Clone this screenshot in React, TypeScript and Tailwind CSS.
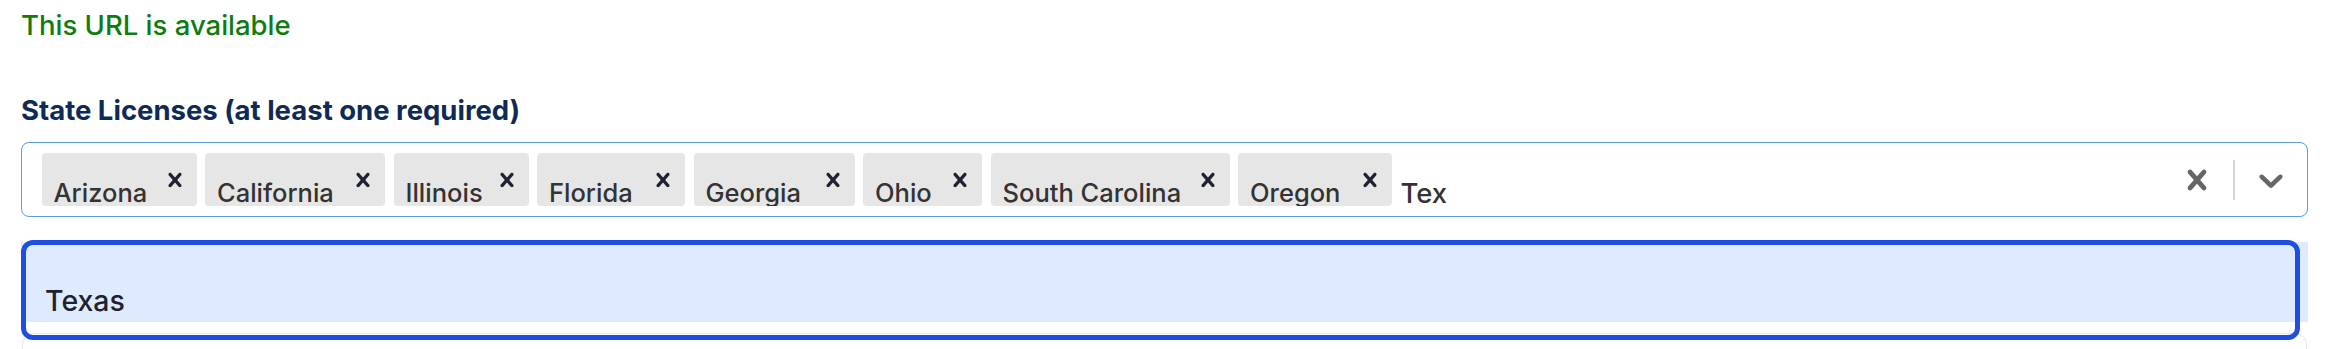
import React from "react";

// react-select style icons
function CrossIcon({ size }: { size: number }) {
  return (
    <svg viewBox="0 0 20 20" width={size} height={size} fill="currentColor" aria-hidden="true">
      <path d="M14.348 14.849c-0.469 0.469-1.229 0.469-1.697 0l-2.651-3.030-2.651 3.029c-0.469 0.469-1.229 0.469-1.697 0-0.469-0.469-0.469-1.229 0-1.697l2.758-3.15-2.759-3.152c-0.469-0.469-0.469-1.228 0-1.697s1.228-0.469 1.697 0l2.652 3.031 2.651-3.031c0.469-0.469 1.228-0.469 1.697 0s0.469 1.229 0 1.697l-2.758 3.152 2.758 3.15c0.469 0.469 0.469 1.229 0 1.698z" />
    </svg>
  );
}

function ChevronIcon({ size }: { size: number }) {
  return (
    <svg viewBox="0 0 20 20" width={size} height={size} fill="currentColor" aria-hidden="true">
      <path d="M4.516 7.548c0.436-0.446 1.043-0.481 1.576 0l3.908 3.747 3.908-3.747c0.533-0.481 1.141-0.446 1.574 0 0.436 0.445 0.408 1.197 0 1.615-0.406 0.418-4.695 4.502-4.695 4.502-0.217 0.223-0.502 0.335-0.787 0.335s-0.57-0.112-0.789-0.335c0 0-4.287-4.084-4.695-4.502s-0.436-1.17 0-1.615z" />
    </svg>
  );
}

const states = [
  { name: "Arizona", w: "w-[155px]" },
  { name: "California", w: "w-[180px]" },
  { name: "Illinois", w: "w-[135px]" },
  { name: "Florida", w: "w-[148px]" },
  { name: "Georgia", w: "w-[161px]" },
  { name: "Ohio", w: "w-[119px]" },
  { name: "South Carolina", w: "w-[239px]" },
  { name: "Oregon", w: "w-[154px]" },
];

function Chip({ name, w }: { name: string; w: string }) {
  return (
    <div className={`flex h-[53px] shrink-0 overflow-hidden rounded-[4px] bg-[#e6e6e6] ${w}`}>
      <div className="min-w-0 flex-1 self-start overflow-hidden whitespace-nowrap pl-[12px] pt-[26.5px] text-[25.5px] font-medium leading-[26px] text-[#333]">
        {name}
      </div>
      <div className="flex w-[44px] shrink-0 items-center justify-center text-[#1f2233]">
        <CrossIcon size={28} />
      </div>
    </div>
  );
}

export default function App() {
  return (
    <div className="h-[349px] overflow-hidden bg-white pl-[21px] pr-[19px] font-['Inter',sans-serif]">
      <p className="pt-[9px] text-[27.5px] font-medium leading-[32px] text-[#0e7c0e]">This URL is available</p>

      <p className="mt-[53px] text-[27.5px] font-bold leading-[32px] text-[#0f2b55]">
        State Licenses (at least one required)
      </p>

      {/* Control */}
      <div className="mt-[16px] flex h-[75px] items-center rounded-[8px] border-[1.5px] border-[#5b9be0]">
        <div className="flex min-w-0 flex-1 items-center gap-[8.5px] overflow-hidden pl-[19.5px]">
          {states.map((s) => (
            <Chip key={s.name} name={s.name} w={s.w} />
          ))}
          <div className="self-start whitespace-nowrap pt-[26px] text-[27.5px] font-medium leading-[28px] text-[#333]">
            Tex
          </div>
        </div>
        <div className="flex w-[72px] shrink-0 items-center justify-center text-[#666]">
          <CrossIcon size={40} />
        </div>
        <div className="h-[40px] w-[2px] shrink-0 bg-[#d4d4d4]" />
        <div className="flex w-[72px] shrink-0 items-center justify-center text-[#666]">
          <ChevronIcon size={40} />
        </div>
      </div>

      {/* Menu */}
      <div className="relative mt-[17px] bg-white pt-[8px]">
        <div className="h-[80px] bg-[#deebff] pl-[24px] pt-[42.5px] text-[28.5px] font-medium leading-[32px] text-[#1e2230]">
          Texas
        </div>
        <div className="mx-[1px] mt-[11px] h-[16px] rounded-t-[12px] border border-b-0 border-[#e8e8e8]" />
        <div className="pointer-events-none absolute left-0 right-[8px] top-[6px] h-[100px] rounded-[12px] border-[5px] border-[#1f4fe0]" />
      </div>
    </div>
  );
}
